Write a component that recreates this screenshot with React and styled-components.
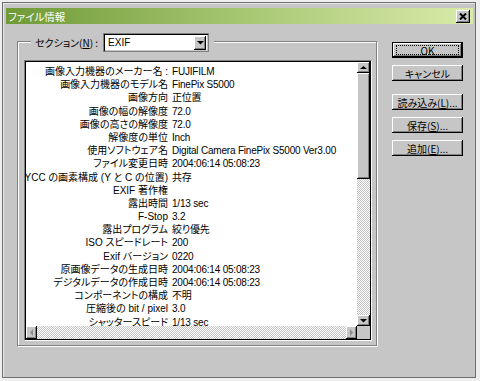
import React from 'react';
import styled, { createGlobalStyle, css } from 'styled-components';

const GlobalStyle = createGlobalStyle`
  body {
    margin: 0;
    background: #eeeeee;
    font-family: "Liberation Sans", "Noto Sans CJK JP", sans-serif;
    font-size: 10px;
    font-feature-settings: "palt";
    color: #000;
  }
`;

const rows = [
  ['画像入力機器のメーカー名 :', 'FUJIFILM'],
  ['画像入力機器のモデル名', 'FinePix S5000'],
  ['画像方向', '正位置'],
  ['画像の幅の解像度', '72.0'],
  ['画像の高さの解像度', '72.0'],
  ['解像度の単位', 'Inch'],
  ['使用ソフトウェア名', 'Digital Camera FinePix S5000 Ver3.00'],
  ['ファイル変更日時', '2004:06:14 05:08:23'],
  ['YCC の画素構成 (Y と C の位置)', '共存'],
  ['EXIF 著作権', ''],
  ['露出時間', '1/13 sec'],
  ['F-Stop', '3.2'],
  ['露出プログラム', '絞り優先'],
  ['ISO スピードレート', '200'],
  ['Exif バージョン', '0220'],
  ['原画像データの生成日時', '2004:06:14 05:08:23'],
  ['デジタルデータの作成日時', '2004:06:14 05:08:23'],
  ['コンポーネントの構成', '不明'],
  ['圧縮後の bit / pixel', '3.0'],
  ['シャッタースピード', '1/13 sec'],
];

const raised = css`
  background: #c6c6c6;
  box-shadow: inset -1px -1px #000, inset 1px 1px #fff, inset -2px -2px #808080;
`;

const dither = css`
  background: repeating-conic-gradient(#c6c6c6 0 25%, #ffffff 0 50%) 0 0 / 2px 2px;
`;

const Window = styled.div`
  box-sizing: border-box;
  margin: 2px 0 0 2px;
  width: 474px;
  height: 376px;
  border: 1px solid #6e6e6e;
  background: #c6c6c6;
  box-shadow: inset 1px 1px #e8e8e8;
`;

const TitleBar = styled.div`
  margin: 5px 2px 0 3px;
  height: 16px;
  display: flex;
  align-items: center;
  justify-content: space-between;
  padding: 0 3px 0 2px;
  background: linear-gradient(to right, #6f9a35, #a6c672 50%, #d9eaa9);
  color: #fff;
  font-family: "Noto Sans CJK JP", sans-serif;
  font-size: 10.5px;
`;

const CloseButton = styled.div`
  ${raised}
  width: 14px;
  height: 13px;
  display: flex;
  align-items: center;
  justify-content: center;
`;

const Content = styled.div`
  display: flex;
  align-items: flex-start;
  margin-top: 9px;
  padding-left: 14px;
`;

const Group = styled.div`
  box-sizing: border-box;
  width: 360px;
  margin-top: 8px;
  padding: 0 4px 4px 6px;
  border: 1px solid #808080;
  box-shadow: inset 1px 1px #fff, 1px 1px #fff;
`;

const Legend = styled.div`
  display: flex;
  align-items: center;
  gap: 5px;
  width: fit-content;
  height: 19px;
  margin: -9px 0 0 7px;
  padding: 0 5px 0 4px;
  background: #c6c6c6;
  font-family: "Noto Sans CJK JP", sans-serif;
`;

const Combo = styled.div`
  box-sizing: border-box;
  width: 106px;
  height: 19px;
  display: flex;
  align-items: center;
  justify-content: space-between;
  padding: 0 2px 0 4px;
  background: #fff;
  border: 1px solid #808080;
  box-shadow: inset 1px 1px #000, inset -1px -1px #c6c6c6;
  font-family: "Liberation Sans", sans-serif;
`;

const DropButton = styled.div`
  ${raised}
  width: 12px;
  height: 14px;
  display: flex;
  align-items: center;
  justify-content: center;
`;

const ListBox = styled.div`
  box-sizing: border-box;
  width: 348px;
  height: 281px;
  margin-top: 8px;
  border: 1px solid;
  border-color: #808080 #fff #fff #808080;
  box-shadow: inset 0 0 0 1px #000;
  padding: 1px;
  display: grid;
  grid-template-columns: 1fr 13px;
  grid-template-rows: 1fr 13px;
`;

const ListArea = styled.div`
  background: #fff;
  overflow: hidden;
  padding-top: 3px;
`;

const Row = styled.div`
  display: flex;
  height: 13.2px;
  line-height: 13.2px;
  white-space: nowrap;
`;

const Label = styled.div`
  flex: none;
  width: 142px;
  display: flex;
  justify-content: flex-end;
`;

const Value = styled.div`
  margin-left: 4px;
  letter-spacing: -0.2px;
`;

const VScroll = styled.div`
  ${dither}
  display: flex;
  flex-direction: column;
`;

const HScroll = styled.div`
  ${dither}
  display: flex;
  justify-content: space-between;
`;

const ScrollButton = styled.div`
  ${raised}
  flex: none;
  width: ${(p) => (p.$horizontal ? '11px' : '13px')};
  height: ${(p) => (p.$horizontal ? '13px' : '11px')};
  display: flex;
  align-items: center;
  justify-content: center;
`;

const Thumb = styled.div`
  ${raised}
  height: 106px;
`;

const Corner = styled.div`
  background: #c6c6c6;
`;

const Buttons = styled.div`
  display: flex;
  flex-direction: column;
  gap: 7px;
  margin: 9px 0 0 15px;
`;

const Button = styled.div`
  ${raised}
  position: relative;
  box-sizing: border-box;
  width: 71px;
  height: 16px;
  margin-top: ${(p) => (p.$spaced ? '6px' : '0')};
  display: flex;
  align-items: center;
  justify-content: center;
  font-family: "Noto Sans CJK JP", sans-serif;
  font-size: 10px;
  ${(p) =>
    p.$default &&
    css`
      box-shadow: inset 0 0 0 1px #000, inset -2px -2px #000, inset 2px 2px #fff,
        inset -3px -3px #808080;
      &::after {
        content: '';
        position: absolute;
        inset: 3px 4px;
        border: 1px dotted #000;
      }
    `}
`;

function Arrow({ dir, disabled }) {
  const pts = {
    up: '0,3 3.5,0 7,3',
    down: '0,0 3.5,3.5 7,0',
    left: '3,0 0,3.5 3,7',
    right: '0,0 3,3.5 0,7',
  }[dir];
  const vertical = dir === 'up' || dir === 'down';
  return (
    <svg width={vertical ? 7 : 4} height={vertical ? 4 : 7} viewBox={vertical ? '0 0 7 4' : '0 0 4 7'}>
      <polygon points={pts} fill={disabled ? '#8c8c8c' : '#000'} />
    </svg>
  );
}

function App() {
  return (
    <>
      <GlobalStyle />
      <Window>
        <TitleBar>
          <span>ファイル情報</span>
          <CloseButton>
            <svg width="8" height="7" viewBox="0 0 8 7">
              <path d="M1 0.5 L7 6.5 M7 0.5 L1 6.5" stroke="#000" strokeWidth="2" />
            </svg>
          </CloseButton>
        </TitleBar>
        <Content>
          <Group>
            <Legend>
              <span>
                セクション(<u>N</u>) :
              </span>
              <Combo>
                <span>EXIF</span>
                <DropButton>
                  <Arrow dir="down" />
                </DropButton>
              </Combo>
            </Legend>
            <ListBox>
              <ListArea>
                {rows.map(([label, value], i) => (
                  <Row key={i}>
                    <Label>
                      <span>{label}</span>
                    </Label>
                    <Value>{value}</Value>
                  </Row>
                ))}
              </ListArea>
              <VScroll>
                <ScrollButton>
                  <Arrow dir="up" />
                </ScrollButton>
                <Thumb />
                <div style={{ flex: 1 }} />
                <ScrollButton>
                  <Arrow dir="down" />
                </ScrollButton>
              </VScroll>
              <HScroll>
                <ScrollButton $horizontal>
                  <Arrow dir="left" disabled />
                </ScrollButton>
                <ScrollButton $horizontal>
                  <Arrow dir="right" disabled />
                </ScrollButton>
              </HScroll>
              <Corner />
            </ListBox>
          </Group>
          <Buttons>
            <Button $default>OK</Button>
            <Button>キャンセル</Button>
            <Button $spaced>
              読み込み(<u>L</u>)...
            </Button>
            <Button>
              保存(<u>S</u>)...
            </Button>
            <Button>
              追加(<u>E</u>)...
            </Button>
          </Buttons>
        </Content>
      </Window>
    </>
  );
}

export default App;
